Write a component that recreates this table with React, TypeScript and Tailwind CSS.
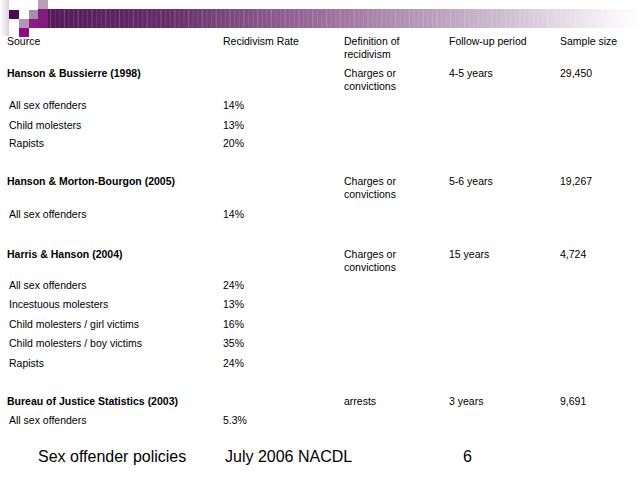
import React from "react";

type Row = {
  c: [React.ReactNode, React.ReactNode, React.ReactNode, React.ReactNode, React.ReactNode];
  h: number;
  bold?: boolean;
  sub?: boolean;
};

const rows: Row[] = [
  { c: ["Source", "Recidivism Rate", <>Definition of<br />recidivism</>, "Follow-up period", "Sample size"], h: 32 },
  { c: ["Hanson & Bussierre (1998)", "", <>Charges or<br />convictions</>, "4-5 years", "29,450"], h: 32, bold: true },
  { c: ["All sex offenders", "14%", "", "", ""], h: 20, sub: true },
  { c: ["Child molesters", "13%", "", "", ""], h: 18, sub: true },
  { c: ["Rapists", "20%", "", "", ""], h: 38, sub: true },
  { c: ["Hanson & Morton-Bourgon (2005)", "", <>Charges or<br />convictions</>, "5-6 years", "19,267"], h: 33, bold: true },
  { c: ["All sex offenders", "14%", "", "", ""], h: 40, sub: true },
  { c: ["Harris & Hanson (2004)", "", <>Charges or<br />convictions</>, "15 years", "4,724"], h: 31, bold: true },
  { c: ["All sex offenders", "24%", "", "", ""], h: 19, sub: true },
  { c: ["Incestuous molesters", "13%", "", "", ""], h: 20, sub: true },
  { c: ["Child molesters / girl victims", "16%", "", "", ""], h: 19, sub: true },
  { c: ["Child molesters / boy victims", "35%", "", "", ""], h: 20, sub: true },
  { c: ["Rapists", "24%", "", "", ""], h: 38, sub: true },
  { c: ["Bureau of Justice Statistics (2003)", "", "arrests", "3 years", "9,691"], h: 19, bold: true },
  { c: ["All sex offenders", "5.3%", "", "", ""], h: 20, sub: true },
];

function Ornament() {
  const stripes: number[] = [];
  for (let x = 50; x < 630; x += 4.6) stripes.push(x);
  return (
    <svg width="638" height="35" viewBox="0 0 638 35" className="block overflow-visible">
      <defs>
        <linearGradient id="bar" x1="47" y1="0" x2="638" y2="0" gradientUnits="userSpaceOnUse">
          <stop offset="0" stopColor="#55185a" />
          <stop offset="0.2" stopColor="#652d68" />
          <stop offset="0.46" stopColor="#9a6c9a" />
          <stop offset="0.77" stopColor="#cdbdd0" />
          <stop offset="0.95" stopColor="#f6f1f6" />
          <stop offset="1" stopColor="#ffffff" />
        </linearGradient>
        <linearGradient id="left" x1="0" y1="0" x2="9" y2="0" gradientUnits="userSpaceOnUse">
          <stop offset="0" stopColor="#ffffff" />
          <stop offset="1" stopColor="#ddd0dd" />
        </linearGradient>
      </defs>
      <rect x="0" y="0" width="9" height="36" fill="url(#left)" />
      <rect x="47" y="9" width="591" height="19" fill="url(#bar)" />
      {stripes.map((x, i) => (
        <rect key={i} x={x} y="9" width="1.2" height="19" fill="#ffffff" opacity={i % 3 === 0 ? 0.18 : 0.1} />
      ))}
      <rect x="38" y="0" width="10" height="9" fill="#b9a0ba" />
      <rect x="9" y="10" width="10" height="9" fill="#4a0d4e" />
      <rect x="29" y="10" width="9" height="9" fill="#a88fa9" />
      <rect x="38" y="9" width="10" height="19" fill="#86197f" />
      <rect x="19" y="19" width="10" height="9" fill="#b394b4" />
      <rect x="29" y="19" width="9" height="9" fill="#8c1a8a" />
      <rect x="19" y="28" width="10" height="9" fill="#8a0c88" />
    </svg>
  );
}

export default function App() {
  return (
    <div className="w-[638px] h-[479px] bg-white overflow-hidden font-['Liberation_Sans',Arial,sans-serif] text-black">
      <Ornament />
      <div className="pl-[7px] text-[10.5px] leading-[13px]">
        {rows.map((r, i) => (
          <div
            key={i}
            className={`grid grid-cols-[216px_121px_105px_111px_78px] ${r.bold ? "font-bold" : ""}`}
            style={{ height: r.h }}
          >
            <div className={r.sub ? "pl-[2px]" : ""}>{r.c[0]}</div>
            <div className="font-normal">{r.c[1]}</div>
            <div className="font-normal">{r.c[2]}</div>
            <div className="font-normal">{r.c[3]}</div>
            <div className="font-normal">{r.c[4]}</div>
          </div>
        ))}
      </div>
      <div className="mt-[14px] flex text-[16px] leading-[18px]">
        <div className="pl-[38px] w-[225px]">Sex offender policies</div>
        <div className="w-[238px]">July 2006 NACDL</div>
        <div>6</div>
      </div>
    </div>
  );
}
